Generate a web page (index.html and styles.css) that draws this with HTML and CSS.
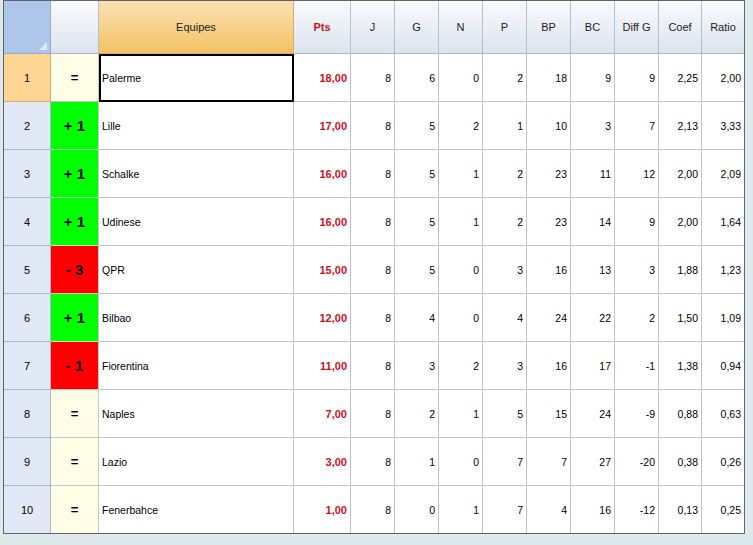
FILE: index.html
```html
<!DOCTYPE html>
<html>
<head>
<meta charset="utf-8">
<link rel="stylesheet" href="styles.css">
</head>
<body>
<div class="grid">
  <div class="c hdr corner"><span class="tri"></span></div>
  <div class="c hdr h1"></div>
  <div class="c hdr heq">Equipes</div>
  <div class="c hdr hpts">Pts</div>
  <div class="c hdr">J</div>
  <div class="c hdr">G</div>
  <div class="c hdr">N</div>
  <div class="c hdr">P</div>
  <div class="c hdr">BP</div>
  <div class="c hdr">BC</div>
  <div class="c hdr">Diff G</div>
  <div class="c hdr">Coef</div>
  <div class="c hdr last">Ratio</div>

  <div class="c rh sel">1</div><div class="c mv eq">=</div><div class="c name cur">Palerme</div><div class="c pts">18,00</div><div class="c n">8</div><div class="c n">6</div><div class="c n">0</div><div class="c n">2</div><div class="c n">18</div><div class="c n">9</div><div class="c n">9</div><div class="c n">2,25</div><div class="c n last">2,00</div>

  <div class="c rh">2</div><div class="c mv up">+ 1</div><div class="c name">Lille</div><div class="c pts">17,00</div><div class="c n">8</div><div class="c n">5</div><div class="c n">2</div><div class="c n">1</div><div class="c n">10</div><div class="c n">3</div><div class="c n">7</div><div class="c n">2,13</div><div class="c n last">3,33</div>

  <div class="c rh">3</div><div class="c mv up">+ 1</div><div class="c name">Schalke</div><div class="c pts">16,00</div><div class="c n">8</div><div class="c n">5</div><div class="c n">1</div><div class="c n">2</div><div class="c n">23</div><div class="c n">11</div><div class="c n">12</div><div class="c n">2,00</div><div class="c n last">2,09</div>

  <div class="c rh">4</div><div class="c mv up">+ 1</div><div class="c name">Udinese</div><div class="c pts">16,00</div><div class="c n">8</div><div class="c n">5</div><div class="c n">1</div><div class="c n">2</div><div class="c n">23</div><div class="c n">14</div><div class="c n">9</div><div class="c n">2,00</div><div class="c n last">1,64</div>

  <div class="c rh">5</div><div class="c mv down">- 3</div><div class="c name">QPR</div><div class="c pts">15,00</div><div class="c n">8</div><div class="c n">5</div><div class="c n">0</div><div class="c n">3</div><div class="c n">16</div><div class="c n">13</div><div class="c n">3</div><div class="c n">1,88</div><div class="c n last">1,23</div>

  <div class="c rh">6</div><div class="c mv up">+ 1</div><div class="c name">Bilbao</div><div class="c pts">12,00</div><div class="c n">8</div><div class="c n">4</div><div class="c n">0</div><div class="c n">4</div><div class="c n">24</div><div class="c n">22</div><div class="c n">2</div><div class="c n">1,50</div><div class="c n last">1,09</div>

  <div class="c rh">7</div><div class="c mv down">- 1</div><div class="c name">Fiorentina</div><div class="c pts">11,00</div><div class="c n">8</div><div class="c n">3</div><div class="c n">2</div><div class="c n">3</div><div class="c n">16</div><div class="c n">17</div><div class="c n">-1</div><div class="c n">1,38</div><div class="c n last">0,94</div>

  <div class="c rh">8</div><div class="c mv eq">=</div><div class="c name">Naples</div><div class="c pts">7,00</div><div class="c n">8</div><div class="c n">2</div><div class="c n">1</div><div class="c n">5</div><div class="c n">15</div><div class="c n">24</div><div class="c n">-9</div><div class="c n">0,88</div><div class="c n last">0,63</div>

  <div class="c rh">9</div><div class="c mv eq">=</div><div class="c name">Lazio</div><div class="c pts">3,00</div><div class="c n">8</div><div class="c n">1</div><div class="c n">0</div><div class="c n">7</div><div class="c n">7</div><div class="c n">27</div><div class="c n">-20</div><div class="c n">0,38</div><div class="c n last">0,26</div>

  <div class="c rh end">10</div><div class="c mv eq end">=</div><div class="c name end">Fenerbahce</div><div class="c pts end">1,00</div><div class="c n end">8</div><div class="c n end">0</div><div class="c n end">1</div><div class="c n end">7</div><div class="c n end">4</div><div class="c n end">16</div><div class="c n end">-12</div><div class="c n end">0,13</div><div class="c n last end">0,25</div>
</div>
</body>
</html>
```

FILE: styles.css
```css
html, body {
  margin: 0;
  padding: 0;
  background: #dde9ea;
  width: 753px;
  height: 545px;
  overflow: hidden;
}
.grid {
  margin-left: 3px;
  width: 742px;
  box-sizing: border-box;
  border: 1px solid #5f6468;
  display: grid;
  grid-template-columns: 47px 48px 195px 57px repeat(7, 44px) 43px 42px;
  grid-template-rows: 53px repeat(9, 48px) 47px;
  background: #ffffff;
  font-family: "Liberation Sans", Arial, sans-serif;
  font-size: 10.5px;
  color: #000;
}
.c {
  box-sizing: border-box;
  border-right: 1px solid #c3c3c3;
  border-bottom: 1px solid #c3c3c3;
  display: flex;
  align-items: center;
  justify-content: flex-end;
  padding-right: 3px;
  white-space: nowrap;
  background: #fff;
}
.c.last { border-right: none; }
.c.end { border-bottom: none; }

.hdr {
  justify-content: center;
  padding: 0;
  font-size: 11px;
  color: #1c1c1c;
  background: linear-gradient(#f9fbfd, #dbe3ee);
  border-right-color: #b4c0d1;
  border-bottom-color: #a9b7ca;
}
.corner {
  position: relative;
  background: #aec6e9;
  border-right-color: #96abc8;
  border-bottom-color: #96abc8;
}
.tri {
  position: absolute;
  right: 3px;
  bottom: 3px;
  width: 0;
  height: 0;
  border-left: 8px solid transparent;
  border-bottom: 8px solid #dfe8f5;
}
.h1 { background: linear-gradient(#fafbfd, #dce3ee); }
.heq {
  background: linear-gradient(#fbe1b3, #f2c264);
  border-right-color: #e0a85a;
  border-bottom-color: #e0a85a;
}
.hpts { color: #d0101c; font-weight: bold; }

.rh {
  justify-content: center;
  padding: 0;
  font-size: 11px;
  background: #e0e9f5;
  border-right-color: #a9b7ca;
  border-bottom-color: #a9b7ca;
}
.rh.sel {
  background: #ffd593;
  border-right-color: #e0ab62;
  border-bottom-color: #e0ab62;
}
.mv {
  justify-content: center;
  padding: 0;
  font-weight: bold;
  font-size: 15px;
  border-right-color: #c9c9bf;
}
.mv.eq { background: #fffde6; font-size: 13px; }
.mv.up { background: #00ff00; border-bottom-color: #bde8bd; }
.mv.down { background: #ff0000; border-bottom-color: #e8bdbd; }

.name {
  justify-content: flex-start;
  padding-left: 3px;
  padding-right: 0;
}
.name.cur {
  outline: 2px solid #000;
  outline-offset: -2px;
}
.pts {
  color: #cc0f1c;
  font-weight: bold;
  font-size: 11px;
}
```
